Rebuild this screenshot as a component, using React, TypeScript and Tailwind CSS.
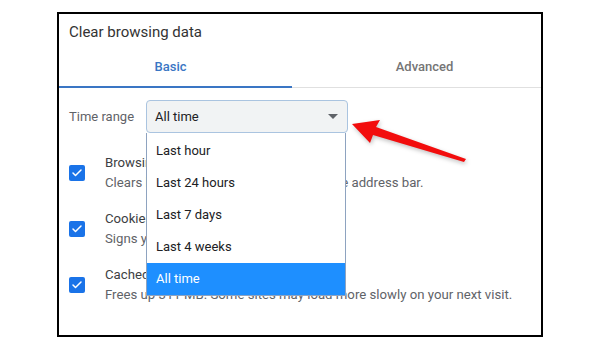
import { Check } from 'lucide-react';

const options = ["Last hour", "Last 24 hours", "Last 7 days", "Last 4 weeks", "All time"];

const rows = [
  { title: "Browsing history", text: "Clears history and autocompletions in the address bar." },
  { title: "Cookies and other site data", text: "Signs you out of most sites." },
  { title: "Cached images and files", text: "Frees up 311 MB. Some sites may load more slowly on your next visit." }
];

export default function App() {
  return (
    <div className="relative w-[600px] h-[350px] bg-white pt-[12px] pl-[57px] font-['Roboto',sans-serif]">
      <div className="w-[486px] h-[325px] border-2 border-black flex flex-col">
        <div className="px-[10px] pt-[8px] pb-[5px] text-[15px] leading-[20px] text-[#333333]">
          Clear browsing data
        </div>
        <div className="flex h-[41px] text-[13px]">
          <div className="w-[233px] flex items-center justify-center pr-[10px] text-[#3a76c4] font-medium border-b-2 border-[#3a76c4]">
            Basic
          </div>
          <div className="flex-1 flex items-center justify-center pl-[16px] text-[#757575] font-medium border-b border-[#e0e0e0] pb-[1px]">
            Advanced
          </div>
        </div>
        <div className="flex items-center px-[10px] mt-[12px] text-[13px]">
          <span className="w-[77px] text-[#5f6368]">Time range</span>
          <div className="relative">
            <div className="w-[202px] h-[33px] rounded-[4px] border border-[#aac4e0] bg-[#f1f3f4] flex items-center justify-between pl-[8px] pr-[9px] text-[#202124]">
              <span>All time</span>
              <svg width="10" height="5" viewBox="0 0 10 5"><path d="M0 0h10L5 5z" fill="#5f6368" /></svg>
            </div>
            <div className="absolute left-0 top-[33px] w-[200px] pt-[2px] bg-white border-x border-b border-[#8ea3c0] z-10">
              {options.map((o, i) => (
                <div
                  key={o}
                  className={i === 4 ? "h-[32px] flex items-center pl-[9px] bg-[#1e8fff] text-white" : "h-[32px] flex items-center pl-[9px] text-[#202124]"}
                >
                  {o}
                </div>
              ))}
            </div>
          </div>
        </div>
        <div className="mt-[12px] px-[10px] flex flex-col">
          {rows.map((r) => (
            <div key={r.title} className="h-[56px] flex items-center gap-[20px]">
              <div className="w-[16px] h-[16px] rounded-[2px] bg-[#1a73e8] flex items-center justify-center">
                <Check className="w-[12px] h-[12px] text-white" strokeWidth={3} />
              </div>
              <div className="text-[13.2px] leading-[20px] text-[#5f6368]">
                <div className="text-[#3c4043]">{r.title}</div>
                <div>{r.text}</div>
              </div>
            </div>
          ))}
        </div>
      </div>
      <svg className="absolute left-0 top-0 pointer-events-none" width="600" height="350">
        <polygon
          points="352,124 380,120 376,127 466,159 464,162 373,135 370,143"
          fill="#f20d0d"
          style={{ filter: 'drop-shadow(1px 2px 2px rgba(0,0,0,0.25))' }}
        />
      </svg>
    </div>
  );
}
